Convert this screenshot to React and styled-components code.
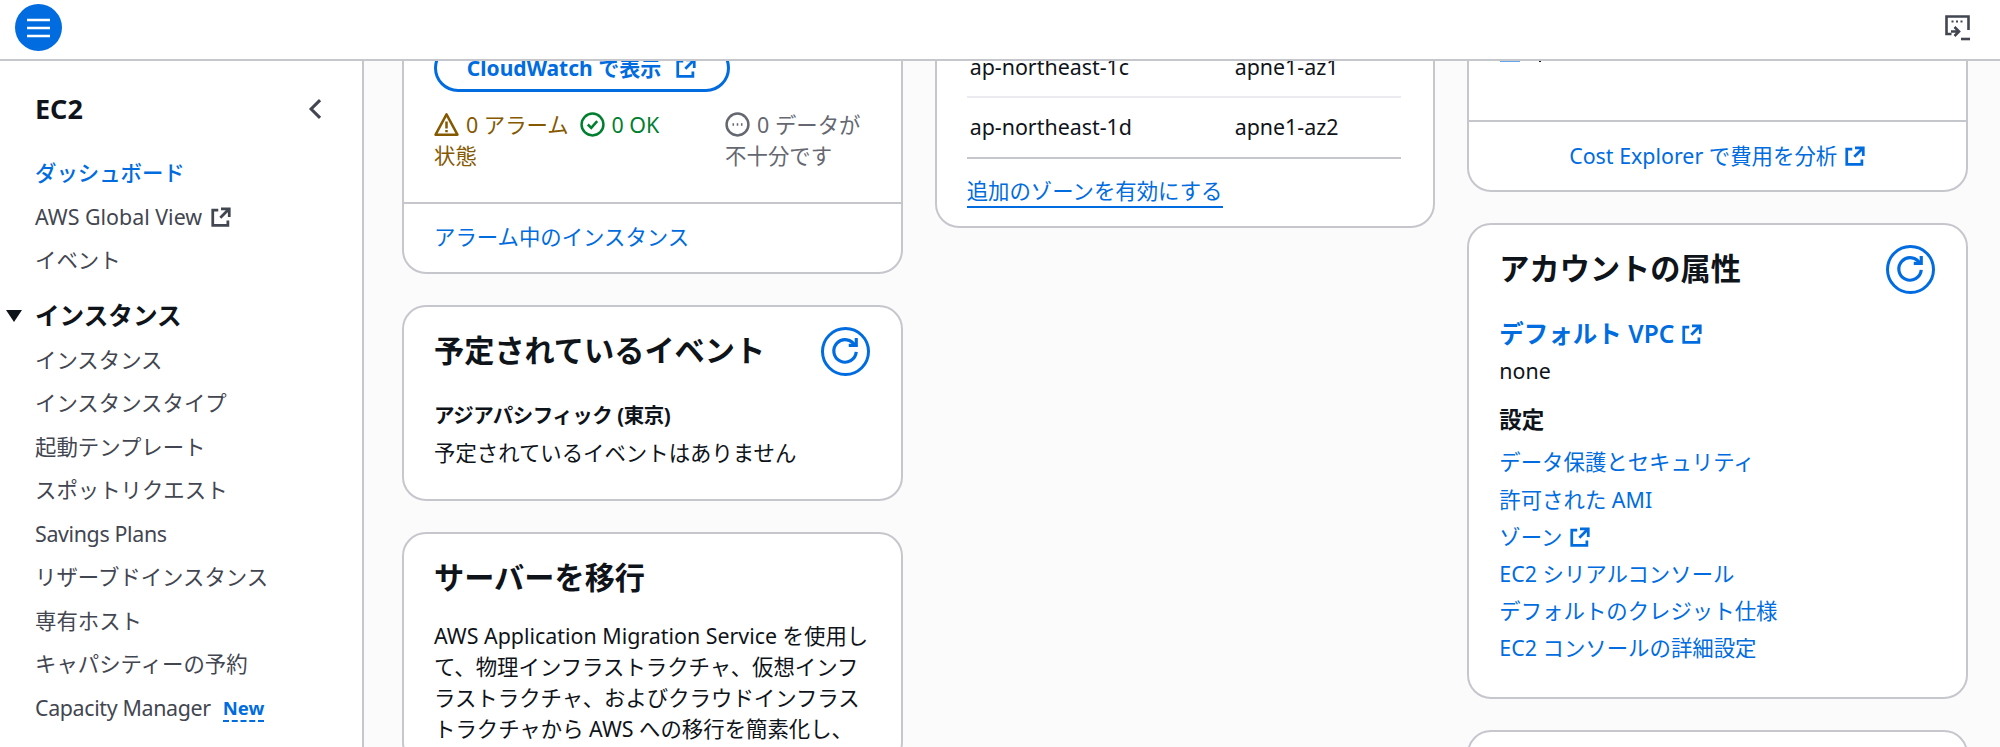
import React from 'react';
import styled, {createGlobalStyle} from 'styled-components';

const BLUE = '#006ce0';
const INK = '#0f141a';
const NAV = '#424650';
const LINE = '#c6c6cd';

const GlobalStyle = createGlobalStyle`
    html, body {
        margin: 0;
        height: 100%;
        overflow: hidden;
        background: #fbfbfb;
    }
    body {
        font-family: "Noto Sans", "Noto Sans CJK JP", sans-serif;
        font-size: 21.4px;
        line-height: 30.6px;
        color: ${INK};
    }
`;

const Page = styled.div`
    height: 747px;
    display: flex;
    flex-direction: column;
    overflow: hidden;
`;

const TopBar = styled.header`
    height: 59px;
    flex-shrink: 0;
    display: flex;
    align-items: flex-start;
    justify-content: space-between;
    padding: 0 30px 0 15px;
    background: #fff;
    border-bottom: 2px solid ${LINE};
`;

const MenuButton = styled.button`
    width: 47px;
    height: 47px;
    margin-top: 4px;
    padding: 0;
    border: none;
    border-radius: 50%;
    background: ${BLUE};
    color: #fff;
    display: flex;
    align-items: center;
    justify-content: center;
`;

const ShellButton = styled.div`
    margin-top: 15px;
    color: ${NAV};
    line-height: 0;
`;

const Body = styled.div`
    flex: 1;
    min-height: 0;
    display: flex;
`;

const Sidebar = styled.nav`
    width: 364px;
    flex-shrink: 0;
    box-sizing: border-box;
    padding: 28px 0 0 35px;
    background: #fff;
    border-right: 2px solid ${LINE};
`;

const SideHeader = styled.div`
    display: flex;
    align-items: center;
    justify-content: space-between;
    width: 294px;
    height: 40px;
    margin-bottom: 23px;
    font-size: 27px;
    font-weight: 700;
    color: ${NAV};

    & > span {
        color: ${INK};
    }
`;

const NavList = styled.div`
    display: flex;
    flex-direction: column;
    margin-bottom: 12px;
`;

const NavItem = styled.div`
    height: 43.5px;
    display: flex;
    align-items: center;
    gap: 8px;
    color: ${props => props.$active ? BLUE : NAV};
    font-weight: ${props => props.$active ? 500 : 400};
    letter-spacing: ${props => props.$tight ? '-0.35px' : 'normal'};
`;

const NavSection = styled.div`
    position: relative;
    height: 44px;
    display: flex;
    align-items: center;
    font-size: 24.6px;
    font-weight: 700;

    & > svg {
        position: absolute;
        left: -29px;
        top: 15px;
    }
`;

const NewBadge = styled.span`
    margin-left: 4px;
    color: ${BLUE};
    font-weight: 700;
    font-size: 18.5px;
    letter-spacing: normal;
    line-height: 25px;
    border-bottom: 2px dashed ${BLUE};
`;

const Main = styled.main`
    flex: 1;
    min-width: 0;
    overflow: hidden;
    padding: 0 32px 0 38px;
`;

// the page is scrolled down, the tops of the first cards are under the header
const Columns = styled.div`
    display: grid;
    grid-template-columns: repeat(3, 1fr);
    column-gap: 32px;
    align-items: start;
    margin-top: -41px;
`;

const Column = styled.div`
    display: flex;
    flex-direction: column;
    gap: 31px;
`;

const Card = styled.section`
    background: #fff;
    border: 2px solid ${LINE};
    border-radius: 24px;
    box-sizing: border-box;
    overflow: hidden;
    height: ${props => props.$height ? `${props.$height}px` : 'auto'};
`;

const CardBody = styled.div`
    padding: ${props => props.$padding || '30px'};
`;

const CardFooter = styled.div`
    border-top: 2px solid ${LINE};
    padding: ${props => props.$center ? '19px 30px 18px' : '18px 30px 19px'};
    text-align: ${props => props.$center ? 'center' : 'left'};
`;

const CardHead = styled.div`
    display: flex;
    align-items: center;
    justify-content: space-between;
    margin-bottom: ${props => props.$gap || 30}px;
    min-height: 48px;
`;

const CardTitle = styled.h2`
    margin: 0;
    font-size: 30.2px;
    line-height: 40px;
    font-weight: 700;
`;

const RefreshButton = styled.div`
    width: 49px;
    height: 49px;
    margin-right: 1px;
    box-sizing: border-box;
    border: 3px solid ${BLUE};
    border-radius: 50%;
    color: ${BLUE};
    display: flex;
    align-items: center;
    justify-content: center;
`;

const OutlineButton = styled.div`
    width: 296px;
    height: 48px;
    box-sizing: border-box;
    border: 3px solid ${BLUE};
    border-radius: 30px;
    color: ${BLUE};
    font-size: 21px;
    font-weight: 700;
    display: flex;
    align-items: center;
    justify-content: center;
    gap: 14px;
`;

const StatusGrid = styled.div`
    display: grid;
    grid-template-columns: repeat(3, 1fr);
    margin-top: 18px;
    height: 92px;
`;

const Status = styled.div`
    color: ${props => props.$color};

    & > svg {
        vertical-align: -4px;
        margin-right: 7px;
    }
`;

const Link = styled.a`
    color: ${BLUE};
    display: inline-flex;
    align-items: center;
    gap: 7px;
`;

const BoldLine = styled.div`
    font-size: 20.5px;
    letter-spacing: -0.5px;
    font-weight: 700;
    line-height: 38px;
`;

const PlainLine = styled.div`
    line-height: 37px;
`;

const Paragraph = styled.p`
    margin: 0;
    line-height: 31.2px;
`;

const ZoneRow = styled.div`
    display: grid;
    grid-template-columns: 265px 1fr;
    box-sizing: border-box;
    height: ${props => props.$last ? 61 : 62}px;
    padding: ${props => props.$last ? '0' : '2px'} 0 0 3px;
    align-items: center;
    border-bottom: 2px solid ${props => props.$last ? LINE : '#ebebf0'};
`;

const EnableLink = styled.a`
    display: inline-block;
    margin-top: 17px;
    color: ${BLUE};
    line-height: 30px;
    border-bottom: 2px solid ${BLUE};
`;

const CostStub = styled.div`
    height: 98px;
    padding: 0 31px;
    display: flex;
    align-items: flex-start;
    gap: 19px;
`;

const CostMark = styled.span`
    width: 20px;
    height: 2px;
    margin-top: 38px;
    background: ${BLUE};
    opacity: 0.6;
`;

const CostTick = styled.span`
    width: 2px;
    height: 2px;
    margin-top: 38px;
    background: ${INK};
`;

const AccountLink = styled(Link)`
    display: flex;
    margin-bottom: 4px;
    font-size: 24.5px;
    font-weight: 600;
    line-height: 36px;
`;

const SettingsTitle = styled.div`
    margin-top: 16px;
    margin-bottom: 6px;
    font-size: 22.5px;
    font-weight: 700;
    line-height: 36px;
`;

const SettingsList = styled.div`
    display: flex;
    flex-direction: column;
`;

const SettingsItem = styled.div`
    height: 37.2px;
    display: flex;
    align-items: center;
`;

const ExternalIcon = ({size = 22}) => (
    <svg width={size} height={size} viewBox="0 0 16 16" fill="none" stroke="currentColor" strokeWidth="2">
        <path d="M14 8V2H8M14 2 7.5 8.5"/>
        <path d="M6 3H2v11h11v-3.5"/>
    </svg>
);

const RefreshIcon = () => (
    <svg width="30" height="30" viewBox="0 0 16 16" fill="none" stroke="currentColor" strokeWidth="1.7">
        <path d="M10 5h4V1"/>
        <path d="M14 8.5a6 6 0 1 1-.6-3.2"/>
    </svg>
);

const WarningIcon = () => (
    <svg width="25" height="25" viewBox="0 0 16 16" fill="none" stroke="currentColor" strokeWidth="1.6" strokeLinejoin="round">
        <path d="m8 1.5 7 13H1l7-13Z"/>
        <path d="M8 6v4.5M8 11.5v1.5"/>
    </svg>
);

const SuccessIcon = () => (
    <svg width="25" height="25" viewBox="0 0 16 16" fill="none" stroke="currentColor" strokeWidth="1.6">
        <circle cx="8" cy="8" r="7"/>
        <path d="m5 8 2.2 2.2L11 5.8"/>
    </svg>
);

const PendingIcon = () => (
    <svg width="25" height="25" viewBox="0 0 16 16" fill="none" stroke="currentColor" strokeWidth="1.6">
        <circle cx="8" cy="8" r="7"/>
        <path d="M4.8 8h1M7.5 8h1M10.2 8h1"/>
    </svg>
);

const ShellIcon = () => (
    <svg width="25" height="26" viewBox="0 0 25 26" fill="none" stroke="currentColor" strokeWidth="2.6">
        <path d="M6.5 19H1.5V1.5h22V15"/>
        <path d="M6.5 6.5h2M11 6.5h2M15.5 6.5h2" strokeWidth="2.2"/>
        <path d="M6 16.5h8M9.5 12l4.5 4.5L9.5 21"/>
        <path d="M16 24h9"/>
    </svg>
);

const App = () => (
    <Page>
        <GlobalStyle/>
        <TopBar>
            <MenuButton aria-label="menu">
                <svg width="23" height="20" viewBox="0 0 23 20" fill="none" stroke="currentColor" strokeWidth="2.6">
                    <path d="M0 2h23M0 10h23M0 18h23"/>
                </svg>
            </MenuButton>
            <ShellButton><ShellIcon/></ShellButton>
        </TopBar>
        <Body>
            <Sidebar>
                <SideHeader>
                    <span>EC2</span>
                    <svg width="26" height="26" viewBox="0 0 16 16" fill="none" stroke="currentColor" strokeWidth="1.9">
                        <path d="m10.5 2.5-5.5 5.5 5.5 5.5"/>
                    </svg>
                </SideHeader>
                <NavList>
                    <NavItem $active>ダッシュボード</NavItem>
                    <NavItem>AWS Global View <ExternalIcon/></NavItem>
                    <NavItem>イベント</NavItem>
                </NavList>
                <NavSection>
                    <svg width="16" height="12" viewBox="0 0 16 12" fill={INK}><path d="M0 0h16L8 12z"/></svg>
                    インスタンス
                </NavSection>
                <NavList>
                    <NavItem>インスタンス</NavItem>
                    <NavItem>インスタンスタイプ</NavItem>
                    <NavItem>起動テンプレート</NavItem>
                    <NavItem>スポットリクエスト</NavItem>
                    <NavItem $tight>Savings Plans</NavItem>
                    <NavItem>リザーブドインスタンス</NavItem>
                    <NavItem>専有ホスト</NavItem>
                    <NavItem>キャパシティーの予約</NavItem>
                    <NavItem $tight>Capacity Manager <NewBadge>New</NewBadge></NavItem>
                </NavList>
            </Sidebar>
            <Main>
                <Columns>
                    <Column>
                        <Card>
                            <CardBody $padding="22px 30px 0">
                                <OutlineButton>CloudWatch で表示 <ExternalIcon/></OutlineButton>
                                <StatusGrid>
                                    <Status $color="#855900"><WarningIcon/>0 アラーム状態</Status>
                                    <Status $color="#00802f"><SuccessIcon/>0 OK</Status>
                                    <Status $color="#656871"><PendingIcon/>0 データが不十分です</Status>
                                </StatusGrid>
                            </CardBody>
                            <CardFooter><Link>アラーム中のインスタンス</Link></CardFooter>
                        </Card>
                        <Card>
                            <CardBody $padding="20px 30px 28px">
                                <CardHead $gap={20}>
                                    <CardTitle>予定されているイベント</CardTitle>
                                    <RefreshButton><RefreshIcon/></RefreshButton>
                                </CardHead>
                                <BoldLine>アジアパシフィック (東京)</BoldLine>
                                <PlainLine>予定されているイベントはありません</PlainLine>
                            </CardBody>
                        </Card>
                        <Card>
                            <CardBody $padding="20px 30px">
                                <CardHead $gap={18}>
                                    <CardTitle>サーバーを移行</CardTitle>
                                </CardHead>
                                <Paragraph>
                                    AWS Application Migration Service を使用して、物理インフラストラクチャ、仮想インフラストラクチャ、およびクラウドインフラストラクチャから AWS への移行を簡素化し、
                                </Paragraph>
                            </CardBody>
                        </Card>
                    </Column>
                    <Column>
                        <Card>
                            <CardBody $padding="14px 32px 18px 30px">
                                <ZoneRow><span>ap-northeast-1c</span><span>apne1-az1</span></ZoneRow>
                                <ZoneRow $last><span>ap-northeast-1d</span><span>apne1-az2</span></ZoneRow>
                                <EnableLink>追加のゾーンを有効にする</EnableLink>
                            </CardBody>
                        </Card>
                    </Column>
                    <Column>
                        <Card>
                            <CostStub><CostMark/><CostTick/></CostStub>
                            <CardFooter $center><Link>Cost Explorer で費用を分析 <ExternalIcon/></Link></CardFooter>
                        </Card>
                        <Card>
                            <CardBody $padding="20px 30px 30px">
                                <CardHead $gap={22}>
                                    <CardTitle>アカウントの属性</CardTitle>
                                    <RefreshButton><RefreshIcon/></RefreshButton>
                                </CardHead>
                                <AccountLink>デフォルト VPC <ExternalIcon/></AccountLink>
                                <div>none</div>
                                <SettingsTitle>設定</SettingsTitle>
                                <SettingsList>
                                    <SettingsItem><Link>データ保護とセキュリティ</Link></SettingsItem>
                                    <SettingsItem><Link>許可された AMI</Link></SettingsItem>
                                    <SettingsItem><Link>ゾーン <ExternalIcon/></Link></SettingsItem>
                                    <SettingsItem><Link>EC2 シリアルコンソール</Link></SettingsItem>
                                    <SettingsItem><Link>デフォルトのクレジット仕様</Link></SettingsItem>
                                    <SettingsItem><Link>EC2 コンソールの詳細設定</Link></SettingsItem>
                                </SettingsList>
                            </CardBody>
                        </Card>
                        <Card $height={60}/>
                    </Column>
                </Columns>
            </Main>
        </Body>
    </Page>
);

export default App;
